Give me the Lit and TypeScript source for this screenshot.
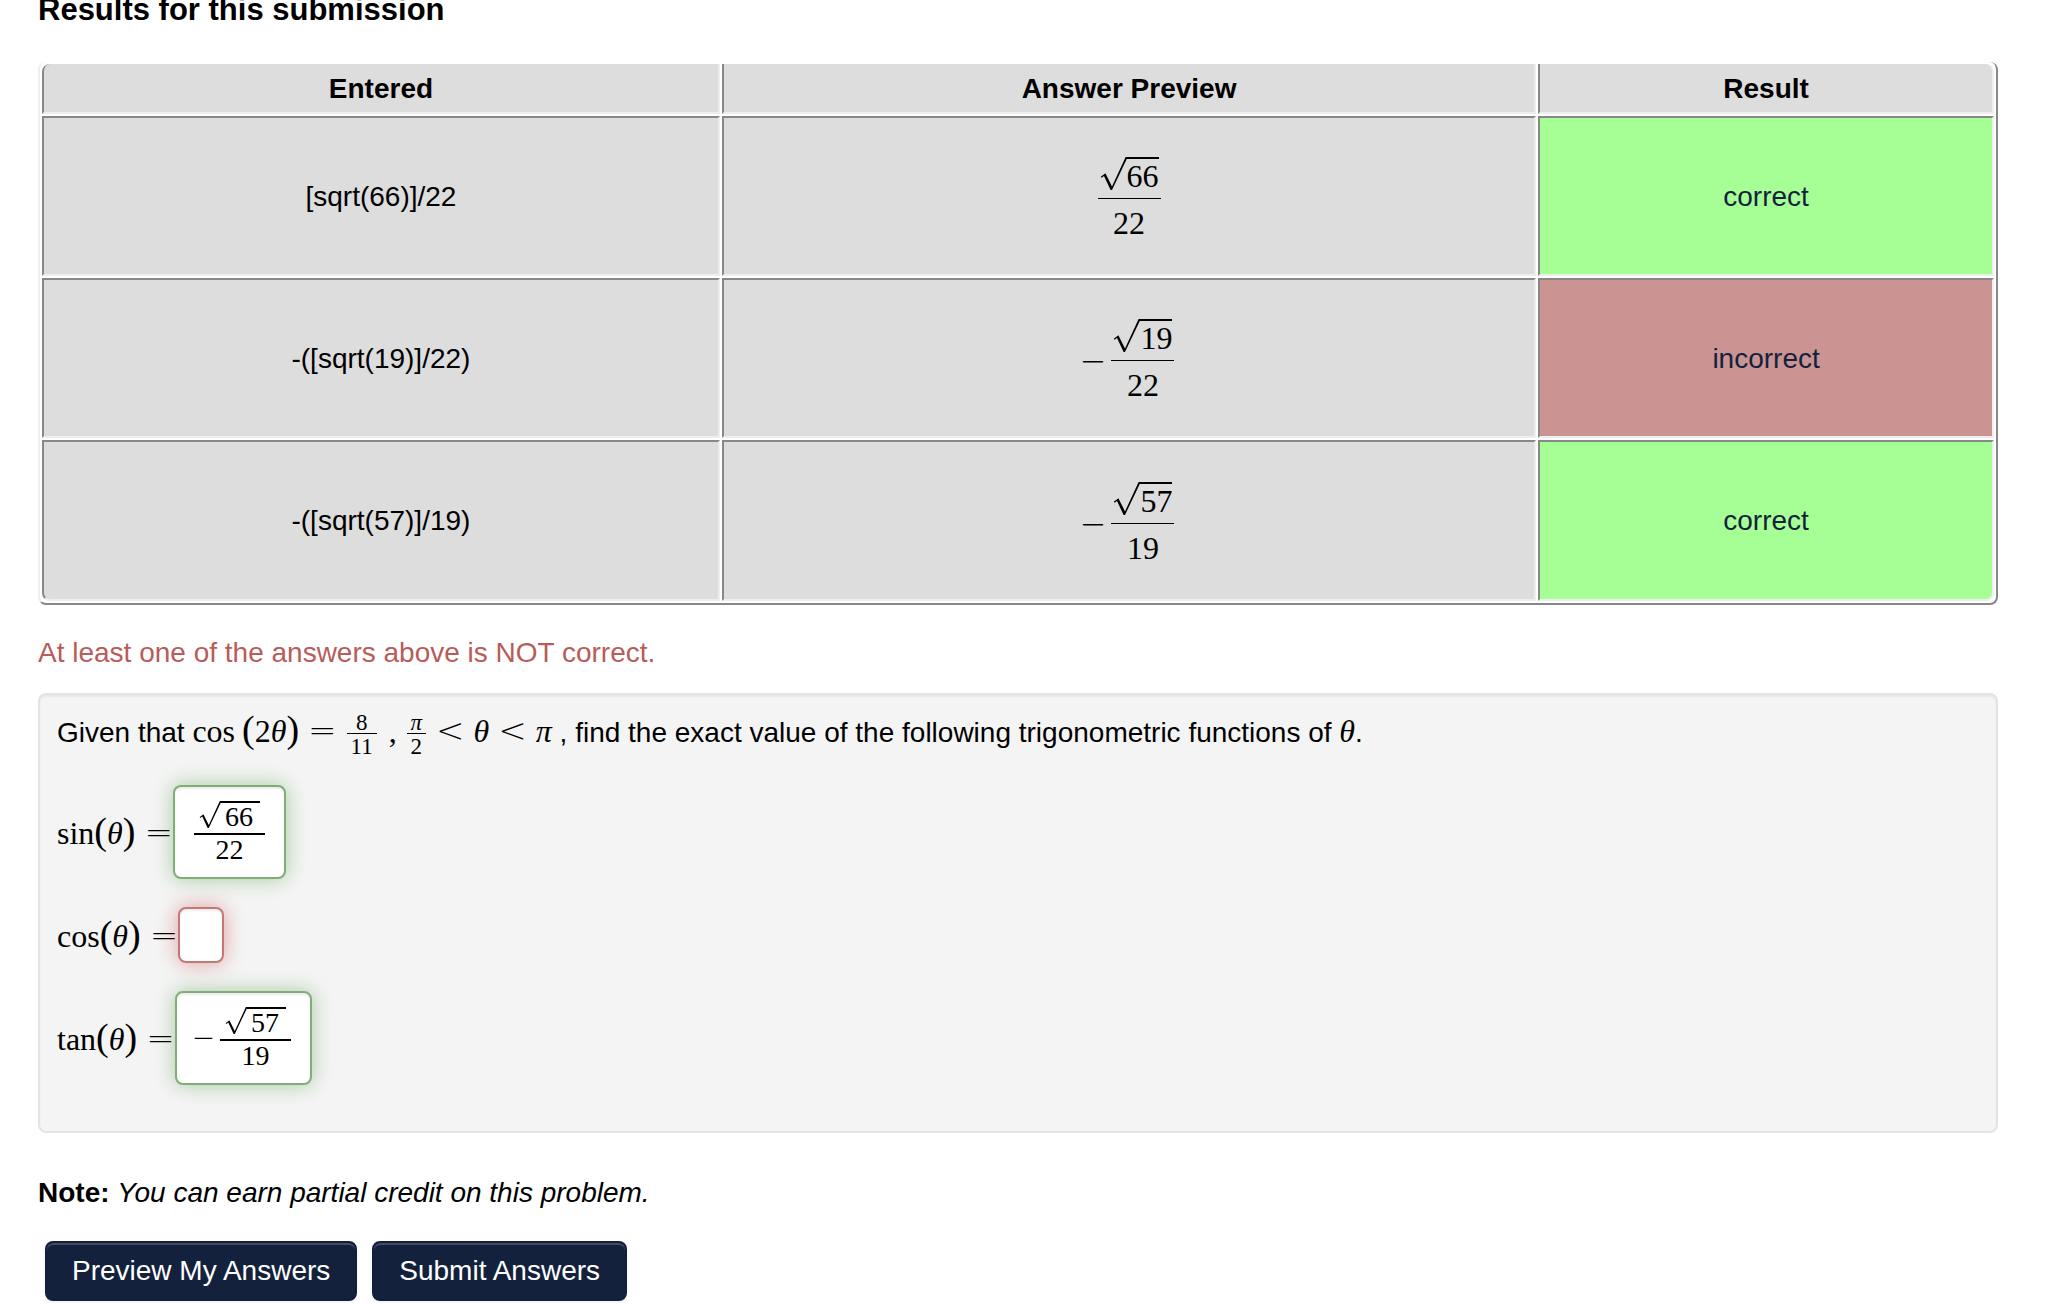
import { LitElement, html, css, svg, TemplateResult } from "lit";
import { customElement } from "lit/decorators.js";

type Part = TemplateResult | string;

const radical = html`<svg class="radical" viewBox="0 0 27 33" aria-hidden="true">
  ${svg`<path d="M0.8 19.8 L5.4 16.2 L12 29.4 L25.6 0 L27 0 L27 1.4 L12 33 L10.6 33 L4 19 L1.6 20.8 Z"></path>`}
</svg>`;

const root = (value: string) =>
  html`<span class="sqrt">${radical}<span class="radicand">${value}</span></span>`;

const fraction = (top: Part, bottom: Part) =>
  html`<span class="frac"><span class="num">${top}</span><span class="den">${bottom}</span></span>`;

const rel = (sign: string) => html`<span class="rel">${sign}</span>`;
const theta = html`<i class="var">θ</i>`;
const pi = html`<i class="var">π</i>`;
const paren = (inner: Part) =>
  html`<span class="paren">(</span>${inner}<span class="paren">)</span>`;
const minus = html`<span class="minus">−</span>`;

const results = [
  { entered: "[sqrt(66)]/22", negative: false, under: "66", den: "22", correct: true },
  { entered: "-([sqrt(19)]/22)", negative: true, under: "19", den: "22", correct: false },
  { entered: "-([sqrt(57)]/19)", negative: true, under: "57", den: "19", correct: true },
];

@customElement("app-root")
export class AppRoot extends LitElement {
  static styles = css`
    :host {
      display: block;
      padding: 0 52px 0 38px;
      overflow: hidden;
      background: #fff;
      color: #000;
      font: 28px/40px "Liberation Sans", Arial, sans-serif;
    }
    h3 {
      margin: -10px 0 32px;
      font-size: 31px;
      line-height: 40px;
    }
    .results {
      width: 100%;
      table-layout: fixed;
      border: 2px solid #888;
      border-left-color: #eee;
      border-top: 0;
      border-radius: 8px;
      border-collapse: separate;
      border-spacing: 2px;
    }
    .entered { width: 34.8%; }
    .result { width: 23.4%; }
    th, td {
      box-sizing: border-box;
      padding: 0;
      text-align: center;
      vertical-align: middle;
      border: 2px solid #eee;
      border-left-color: #888;
      background: #ddd;
    }
    th { border-top: 0; padding: 5px 0 3px; }
    td { border-top-color: #888; padding-top: 1px; }
    td .math { padding: 38px 0 33px; }
    tr:last-child td .math { padding-top: 39px; }
    th:first-child { border-top-left-radius: 8px; }
    th:last-child { border-top-right-radius: 8px; }
    tr:last-child td:first-child { border-bottom-left-radius: 8px; }
    tr:last-child td:last-child { border-bottom-right-radius: 8px; }
    .ok { background: #a6ff94; }
    .bad { background: #cb9391; }
    td a { color: #13213d; text-decoration: none; }

    .math {
      display: inline-flex;
      align-items: center;
      vertical-align: middle;
      font-family: "Liberation Serif", "Times New Roman", serif;
      font-size: 32px;
      line-height: 34px;
    }
    .frac {
      display: inline-flex;
      flex-direction: column;
      align-items: stretch;
      text-align: center;
      vertical-align: middle;
    }
    .num { padding: 0 2px 5px; border-bottom: 1px solid #000; }
    .den { padding-top: 6px; line-height: 36px; }
    .sqrt { display: inline-flex; vertical-align: top; }
    .radical { width: 27px; height: 33px; }
    .radicand { border-top: 2px solid #000; }
    .minus, .rel {
      font-family: "DejaVu Sans Light", "DejaVu Sans", sans-serif;
      font-weight: 200;
    }
    .minus { margin: 0 5px 0 -4px; }

    .warning { margin: 28px 0 20px; color: #b85c5a; }
    .problem {
      padding: 18px 17px 46px;
      border: 2px solid #e3e3e3;
      border-radius: 8px;
      background: #f4f4f4;
      box-shadow: inset 0 2px 2px rgba(0, 0, 0, 0.05);
    }
    .problem p { margin: 0 0 28px; }
    .inline {
      font-family: "Liberation Serif", "Times New Roman", serif;
      font-size: 32px;
      line-height: 0;
    }
    .inline .frac { margin: 0 1px; font-size: 23px; line-height: 20px; }
    .inline .num { padding: 0 4px; }
    .inline .den { padding: 3px 4px 0; line-height: 20px; }
    .punct { margin: 0 1px 0 11px; }
    .paren { font-size: 38px; line-height: 0; }
    .rel { margin: 0 9px; font-size: 34px; line-height: 0; }
    .fn { margin-right: 7px; }
    .answers { display: grid; gap: 28px; justify-items: start; }
    .answer { display: flex; align-items: center; }
    .answer .rel { margin: 0 0 0 9px; }
    .field {
      box-sizing: border-box;
      display: flex;
      align-items: center;
      min-width: 46px;
      min-height: 56px;
      padding: 14px 19px;
      border: 2px solid #81ad77;
      border-radius: 8px;
      background: #fff;
      box-shadow: inset 0 2px 2px rgba(0, 0, 0, 0.075), 0 0 20px rgba(70, 150, 60, 0.45);
      font: 28px/30px "Liberation Serif", "Times New Roman", serif;
    }
    .field .num { padding: 0 5px 2px; border-bottom-width: 2px; }
    .field .den { padding: 2px 0 0; line-height: 26px; }
    .field .radical { width: 22px; height: 27px; }
    .field .radicand { padding: 0 7px 0 4px; line-height: 28px; }
    input.field {
      width: 46px;
      padding: 0;
      border-color: #c37876;
      box-shadow: inset 0 2px 2px rgba(0, 0, 0, 0.075), 0 0 20px rgba(200, 50, 50, 0.45);
    }
    .note { margin: 40px 0 28px; }
    .actions { display: flex; gap: 15px; padding: 0 7px 2px; }
    button {
      height: 60px;
      padding: 0 25px;
      border: 2px solid #10203a;
      border-radius: 8px;
      background: #13213d;
      box-shadow: inset 0 2px 0 rgba(255, 255, 255, 0.2), 0 2px 4px rgba(0, 0, 0, 0.05);
      color: #fff;
      font: inherit;
      cursor: pointer;
    }
  `;

  private answer(name: string, id: string, field: TemplateResult) {
    return html`<div class="answer">
      <label class="inline" id="${id}-label" for=${id}>${name}${paren(theta)}${rel("=")}</label>${field}
    </div>`;
  }

  private field(id: string, content: Part) {
    return html`<span class="field" id=${id} role="textbox" tabindex="0" aria-labelledby="${id}-label">${content}</span>`;
  }

  render() {
    return html`
      <h3>Results for this submission</h3>
      <table class="results">
        <thead>
          <tr>
            <th class="entered" scope="col">Entered</th>
            <th scope="col">Answer Preview</th>
            <th class="result" scope="col">Result</th>
          </tr>
        </thead>
        <tbody>
          ${results.map(
            (r) => html`<tr>
              <td>${r.entered}</td>
              <td><span class="math">${r.negative ? minus : ""}${fraction(root(r.under), r.den)}</span></td>
              <td class=${r.correct ? "ok" : "bad"}><a href="#">${r.correct ? "correct" : "incorrect"}</a></td>
            </tr>`
          )}
        </tbody>
      </table>
      <div class="warning">At least one of the answers above is NOT correct.</div>
      <div class="problem">
        <p>
          Given that
          <span class="inline"><span class="fn">cos</span>${paren(html`2${theta}`)}${rel("=")}${fraction("8", "11")}<span class="punct">,</span></span>
          <span class="inline">${fraction(pi, "2")}${rel("<")}${theta}${rel("<")}${pi}</span>
          , find the exact value of the following trigonometric functions of
          <span class="inline">${theta}</span>.
        </p>
        <div class="answers">
          ${this.answer("sin", "sin", this.field("sin", fraction(root("66"), "22")))}
          ${this.answer("cos", "cos", html`<input class="field" id="cos" type="text" />`)}
          ${this.answer("tan", "tan", this.field("tan", html`${minus}${fraction(root("57"), "19")}`))}
        </div>
      </div>
      <div class="note"><b>Note:</b> <i>You can earn partial credit on this problem.</i></div>
      <div class="actions">
        <button type="button">Preview My Answers</button>
        <button type="submit">Submit Answers</button>
      </div>
    `;
  }
}
